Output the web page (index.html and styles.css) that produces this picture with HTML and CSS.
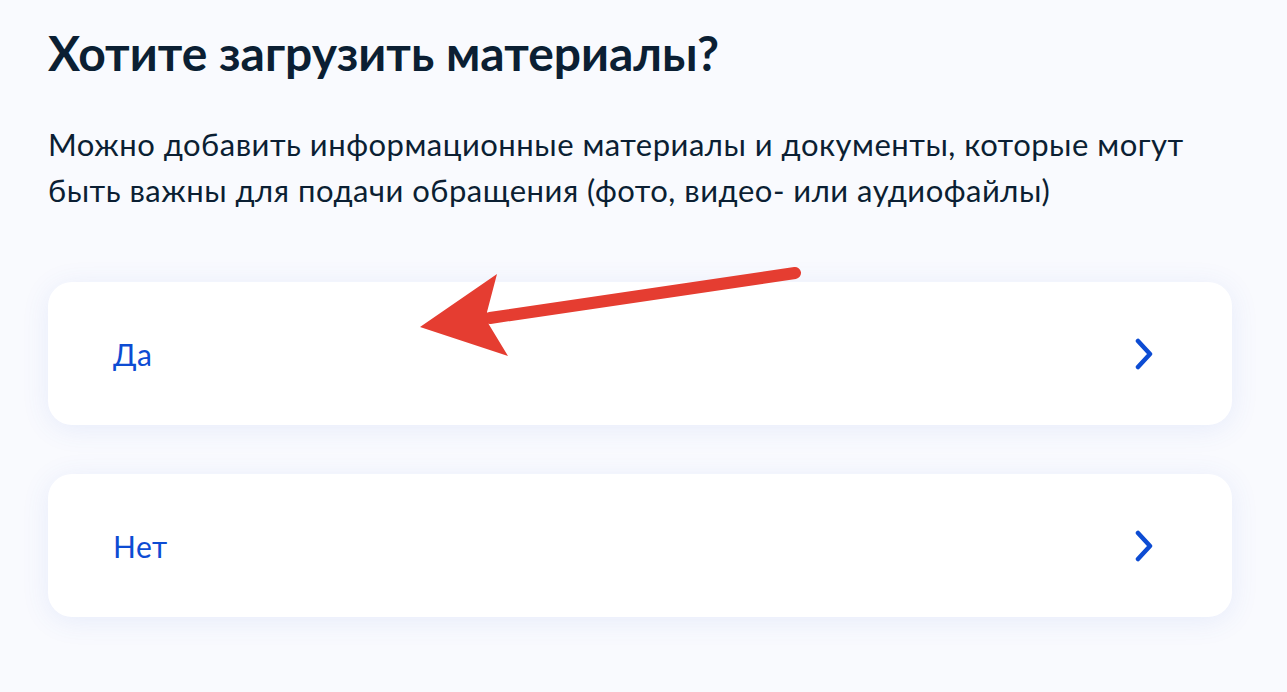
FILE: index.html
```html
<!DOCTYPE html>
<html lang="ru">
<head>
  <meta charset="UTF-8">
  <title>Загрузка материалов</title>
  <link rel="stylesheet" href="styles.css">
</head>
<body>
  <div class="page">
    <h1>Хотите загрузить материалы?</h1>
    <p class="lead">Можно добавить информационные материалы и документы, которые могут быть важны для подачи обращения (фото, видео- или аудиофайлы)</p>

    <div class="options">
      <a class="option" href="#">
        <span>Да</span>
        <svg class="chevron" width="18" height="32" viewBox="0 0 18 32"><path d="M3 3l12 13-12 13" fill="none" stroke="#0d4cd3" stroke-width="4.5" stroke-linecap="round" stroke-linejoin="round"/></svg>
      </a>
      <a class="option" href="#">
        <span>Нет</span>
        <svg class="chevron" width="18" height="32" viewBox="0 0 18 32"><path d="M3 3l12 13-12 13" fill="none" stroke="#0d4cd3" stroke-width="4.5" stroke-linecap="round" stroke-linejoin="round"/></svg>
      </a>
    </div>

    <!-- стрелка-пометка поверх карточки -->
    <svg class="pointer" width="1287" height="692" viewBox="0 0 1287 692">
      <line x1="795" y1="273" x2="490" y2="318" stroke="#e53d31" stroke-width="12" stroke-linecap="round"/>
      <polygon points="420,327 497,274 487,312 488,323 508,356" fill="#e53d31"/>
    </svg>
  </div>
</body>
</html>
```

FILE: styles.css
```css
body {
  margin: 0;
  font-family: Lato, 'Noto Sans', sans-serif;
  background-color: #f9fafe;
  color: #0b1f33;
}

.page {
  position: relative;
  width: 1184px;
  padding: 21px 0 0 48px;
  height: 671px;
}

h1 {
  margin: 0;
  font-size: 48px;
  font-weight: 700;
  line-height: 64px;
}

.lead {
  max-width: 1150px;
  margin: 36px 0 0;
  font-size: 31px;
  letter-spacing: 0.5px;
  line-height: 46px;
}

.options {
  margin-top: 69px;
  display: flex;
  flex-direction: column;
  gap: 49px;
}

.option {
  display: flex;
  align-items: center;
  justify-content: space-between;
  height: 143px;
  padding: 0 79px 0 65px;
  background-color: #fff;
  border-radius: 24px;
  box-shadow: 0 4px 28px rgba(66, 110, 220, 0.1);
  color: #0d4cd3;
  font-size: 30px;
  letter-spacing: 0.5px;
  text-decoration: none;
}

.chevron {
  display: block;
}

.pointer {
  position: absolute;
  top: 0;
  left: 0;
  pointer-events: none;
}
```
